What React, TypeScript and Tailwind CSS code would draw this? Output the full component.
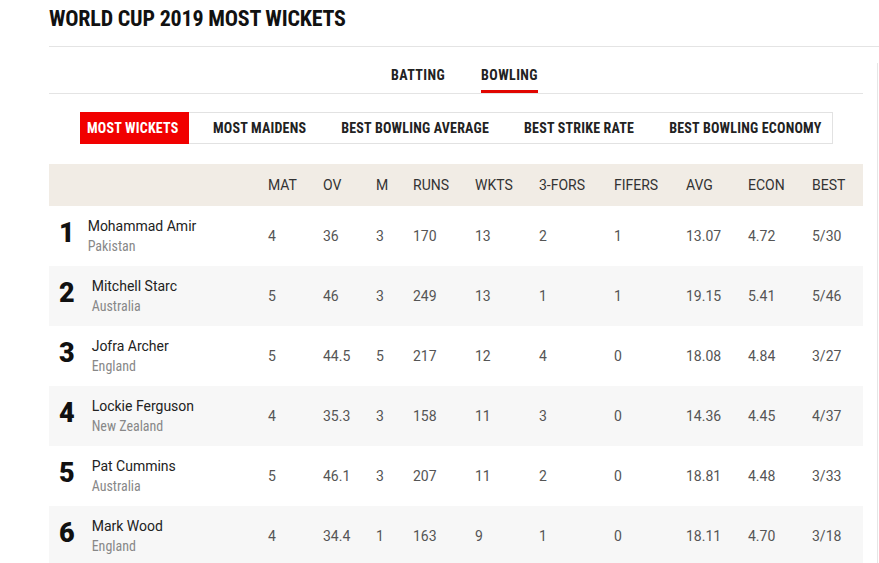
import React from 'react';

interface Bowler {
  rank: number;
  name: string;
  country: string;
  mat: string;
  ov: string;
  m: string;
  runs: string;
  wkts: string;
  threeFors: string;
  fifers: string;
  avg: string;
  econ: string;
  best: string;
}

const bowlers: Bowler[] = [
  { rank: 1, name: 'Mohammad Amir', country: 'Pakistan', mat: '4', ov: '36', m: '3', runs: '170', wkts: '13', threeFors: '2', fifers: '1', avg: '13.07', econ: '4.72', best: '5/30' },
  { rank: 2, name: 'Mitchell Starc', country: 'Australia', mat: '5', ov: '46', m: '3', runs: '249', wkts: '13', threeFors: '1', fifers: '1', avg: '19.15', econ: '5.41', best: '5/46' },
  { rank: 3, name: 'Jofra Archer', country: 'England', mat: '5', ov: '44.5', m: '5', runs: '217', wkts: '12', threeFors: '4', fifers: '0', avg: '18.08', econ: '4.84', best: '3/27' },
  { rank: 4, name: 'Lockie Ferguson', country: 'New Zealand', mat: '4', ov: '35.3', m: '3', runs: '158', wkts: '11', threeFors: '3', fifers: '0', avg: '14.36', econ: '4.45', best: '4/37' },
  { rank: 5, name: 'Pat Cummins', country: 'Australia', mat: '5', ov: '46.1', m: '3', runs: '207', wkts: '11', threeFors: '2', fifers: '0', avg: '18.81', econ: '4.48', best: '3/33' },
  { rank: 6, name: 'Mark Wood', country: 'England', mat: '4', ov: '34.4', m: '1', runs: '163', wkts: '9', threeFors: '1', fifers: '0', avg: '18.11', econ: '4.70', best: '3/18' },
];

const subTabs = ['MOST WICKETS', 'MOST MAIDENS', 'BEST BOWLING AVERAGE', 'BEST STRIKE RATE', 'BEST BOWLING ECONOMY'];

const columns = ['MAT', 'OV', 'M', 'RUNS', 'WKTS', '3-FORS', 'FIFERS', 'AVG', 'ECON', 'BEST'];

const grid = 'grid grid-cols-[219px_55px_53px_37px_62px_64px_75px_72px_62px_64px_1fr]';
const condensed = "font-['Roboto_Condensed','Liberation_Sans_Narrow',Roboto,sans-serif]";

export default function App() {
  return (
    <div className="relative min-h-[563px] w-[879px] overflow-hidden bg-white font-['Roboto',sans-serif] text-[#222]">
      {/* right sidebar edge */}
      <div className="absolute right-[1px] top-[63px] h-[500px] border-l border-[#e6e6e6]" />

      <div className="pl-[49px]">
        <h1 className={`${condensed} pt-[6px] text-[22px] font-bold leading-[26px] tracking-[-0.2px] text-[#111]`}>
          WORLD CUP 2019 MOST WICKETS
        </h1>
        <div className="mt-[14px] border-t border-[#e4e4e4]" />

        <div className="w-[814px]">
          {/* main tabs */}
          <div className="flex justify-center gap-[36px] border-b border-[#e4e4e4] pl-[17px] pt-[20px]">
            <div className={`${condensed} pb-[9px] text-[14px] font-bold leading-[17px] tracking-[0.4px] text-[#222]`}>BATTING</div>
            <div className={`${condensed} border-b-[3px] border-[#e10600] pb-[6px] text-[14px] font-bold leading-[17px] tracking-[0.4px] text-[#222]`}>
              BOWLING
            </div>
          </div>

          {/* sub tabs */}
          <div className="mt-[18px] ml-[31px] flex h-[32px] w-[753px] border border-[#e2e2e2]">
            {subTabs.map((t, i) => (
              <div
                key={t}
                className={
                  i === 0
                    ? `${condensed} -my-px -ml-px flex h-[32px] shrink-0 items-center whitespace-nowrap bg-[#f10000] pl-[7px] pr-[11px] text-[14px] font-bold tracking-[0.2px] text-white`
                    : `${condensed} flex shrink-0 items-center whitespace-nowrap px-[17.5px] text-[14px] font-bold tracking-[0.2px] text-[#222] ${i === 1 ? 'ml-[6px]' : ''}`
                }
              >
                {t}
              </div>
            ))}
          </div>

          {/* table */}
          <div className="mt-[20px]">
            <div className={`${grid} h-[42px] items-center bg-[#f1ece5] text-[14px] text-[#333]`}>
              <div />
              {columns.map((c) => (
                <div key={c}>{c}</div>
              ))}
            </div>
            {bowlers.map((b, i) => (
              <div
                key={b.rank}
                className={`${grid} h-[60px] items-center text-[14px] text-[#555] ${i % 2 === 1 ? 'bg-[#f7f7f7]' : 'bg-white'}`}
              >
                <div className="flex items-center pl-[10px]">
                  <div
                    className={`mb-[6px] font-['Roboto',sans-serif] text-[27px] font-black leading-none text-[#111] ${b.rank === 1 ? 'mr-[13px]' : 'mr-[17px]'}`}
                  >
                    {b.rank}
                  </div>
                  <div>
                    <div className="text-[14px] leading-[19px] text-[#222]">{b.name}</div>
                    <div className={`${condensed} text-[14px] leading-[20px] text-[#888]`}>{b.country}</div>
                  </div>
                </div>
                <div>{b.mat}</div>
                <div>{b.ov}</div>
                <div>{b.m}</div>
                <div>{b.runs}</div>
                <div>{b.wkts}</div>
                <div>{b.threeFors}</div>
                <div>{b.fifers}</div>
                <div>{b.avg}</div>
                <div>{b.econ}</div>
                <div>{b.best}</div>
              </div>
            ))}
          </div>
        </div>
      </div>
    </div>
  );
}
